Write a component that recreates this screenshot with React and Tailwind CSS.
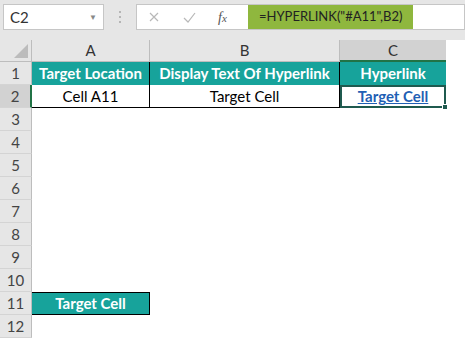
const font = { fontFamily: 'Lato, "Open Sans", sans-serif' };

const rows = Array.from({ length: 12 }, (_, i) => i + 1);

function RowHeader({ n }) {
  const active = n === 2;
  return (
    <div
      className={
        'flex h-[23px] items-center justify-center border-b border-[#d4d4d4] text-[15px] text-[#444] ' +
        (active ? 'border-r-2 border-r-[#217346] bg-[#d2d2d2]' : 'border-r border-r-[#bdbdbd] bg-[#e6e6e6]')
      }
    >
      {n}
    </div>
  );
}

function Row({ n }) {
  if (n === 1) {
    return (
      <div className="flex h-[23px]">
        <div className="flex w-[118px] items-center justify-center border-r border-black bg-[#17a39b] text-[15px] font-bold text-white">
          Target Location
        </div>
        <div className="flex w-[190px] items-center justify-center border-r border-black bg-[#17a39b] text-[15px] font-bold text-white">
          Display Text Of Hyperlink
        </div>
        <div className="flex w-[106px] items-center justify-center bg-[#17a39b] text-[15px] font-bold text-white">
          Hyperlink
        </div>
      </div>
    );
  }
  if (n === 2) {
    return (
      <div className="flex h-[23px]">
        <div className="flex w-[118px] items-center justify-center border-r border-b border-black text-[15px] text-black">
          Cell A11
        </div>
        <div className="flex w-[190px] items-center justify-center border-r border-b border-black text-[15px] text-black">
          Target Cell
        </div>
        <div className="relative flex w-[106px] items-center justify-center border-2 border-[#1f5a4f] text-[15px] font-bold text-[#1f5fb4] underline">
          Target Cell
          <span className="absolute -right-[4px] -bottom-[4px] h-[6px] w-[6px] border border-white bg-[#1f5a4f]" />
        </div>
      </div>
    );
  }
  if (n === 11) {
    return (
      <div className="flex h-[23px]">
        <div className="flex w-[118px] items-center justify-center border border-l-0 border-black bg-[#17a39b] text-[15px] font-bold text-white">
          Target Cell
        </div>
      </div>
    );
  }
  return <div className="h-[23px]" />;
}

export default function App() {
  return (
    <div className="h-[339px] w-[465px] overflow-hidden bg-white" style={font}>
      {/* formula bar */}
      <div className="flex h-[40px] items-start bg-[#e6e6e6] pt-[4px]">
        <div className="ml-[3px] flex h-[26px] w-[101px] items-center justify-between border border-[#c6c6c6] bg-white pl-[6px] pr-[6px] text-[15px] text-[#333]">
          <span>C2</span>
          <span className="text-[8px] text-[#888]">▼</span>
        </div>
        <div className="flex h-[26px] w-[32px] flex-col items-center justify-center gap-[3px]">
          <span className="h-[2px] w-[2px] bg-[#b5b5b5]" />
          <span className="h-[2px] w-[2px] bg-[#b5b5b5]" />
          <span className="h-[2px] w-[2px] bg-[#b5b5b5]" />
        </div>
        <div className="flex h-[26px] flex-1 items-stretch border border-[#c6c6c6] bg-white">
          <div className="flex w-[111px] items-center text-[#b0b0b0]">
            <svg className="ml-[12px]" width="10" height="10" viewBox="0 0 10 10">
              <path d="M1 1L9 9M9 1L1 9" stroke="#b8b8b8" strokeWidth="1.2" fill="none" />
            </svg>
            <svg className="ml-[24px]" width="13" height="11" viewBox="0 0 13 11">
              <path d="M1 6L5 10L12 1" stroke="#b8b8b8" strokeWidth="1.2" fill="none" />
            </svg>
            <span className="ml-[22px] text-[14px] italic text-[#555]" style={{ fontFamily: '"Liberation Serif", serif' }}>
              f<span className="text-[11px]">x</span>
            </span>
          </div>
          <div className="flex w-[165px] items-center bg-[#8fb73e] pl-[11px] text-[13px] text-[#222]">
            =HYPERLINK("#A11",B2)
          </div>
        </div>
      </div>

      {/* grid */}
      <div className="flex">
        <div className="w-[32px] shrink-0">
          <div className="relative h-[22px] border-r border-b border-[#bdbdbd] bg-[#e6e6e6]">
            <svg className="absolute right-[3px] bottom-[3px]" width="14" height="14" viewBox="0 0 14 14">
              <path d="M14 0L14 14L0 14Z" fill="#bcbcbc" />
            </svg>
          </div>
          {rows.map((n) => (
            <RowHeader key={n} n={n} />
          ))}
        </div>
        <div className="flex-1">
          <div className="flex h-[22px] text-[15px] text-[#333]">
            <div className="flex w-[118px] items-center justify-center border-r border-b border-[#bdbdbd] bg-[#e6e6e6]">A</div>
            <div className="flex w-[190px] items-center justify-center border-r border-b border-[#bdbdbd] bg-[#e6e6e6]">B</div>
            <div className="flex w-[106px] items-center justify-center border-b-2 border-[#217346] bg-[#d2d2d2]">C</div>
          </div>
          {rows.map((n) => (
            <Row key={n} n={n} />
          ))}
        </div>
      </div>
    </div>
  );
}
